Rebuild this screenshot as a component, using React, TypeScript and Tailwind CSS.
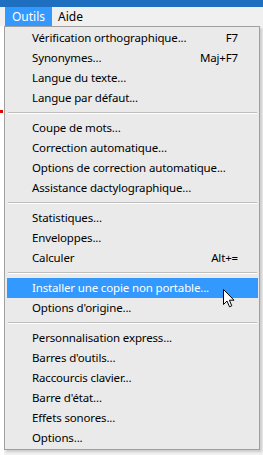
const font = { fontFamily: '"Segoe UI", "Noto Sans", sans-serif' };

type Entry = { label: string; shortcut?: string; active?: boolean } | "sep";

const entries: Entry[] = [
  { label: "Vérification orthographique...", shortcut: "F7" },
  { label: "Synonymes...", shortcut: "Maj+F7" },
  { label: "Langue du texte..." },
  { label: "Langue par défaut..." },
  "sep",
  { label: "Coupe de mots..." },
  { label: "Correction automatique..." },
  { label: "Options de correction automatique..." },
  { label: "Assistance dactylographique..." },
  "sep",
  { label: "Statistiques..." },
  { label: "Enveloppes..." },
  { label: "Calculer", shortcut: "Alt+=" },
  "sep",
  { label: "Installer une copie non portable...", active: true },
  { label: "Options d'origine..." },
  "sep",
  { label: "Personnalisation express..." },
  { label: "Barres d'outils..." },
  { label: "Raccourcis clavier..." },
  { label: "Barre d'état..." },
  { label: "Effets sonores..." },
  { label: "Options..." },
];

function Cursor() {
  return (
    <svg width="12" height="19" viewBox="0 0 12 19" className="absolute left-[216px] top-[11px] z-10">
      <path d="M0.5 0.5 L0.5 15.5 L4 12 L6.5 17.8 L8.8 16.8 L6.4 11.2 L11 11.2 Z" fill="#ffffff" stroke="#000000" strokeWidth="1" strokeLinejoin="round" />
    </svg>
  );
}

export default function App() {
  return (
    <div className="flex h-[455px] w-[263px] flex-col overflow-hidden bg-[#f0f0f0] text-[11.5px] tracking-[-0.15px] text-black" style={font}>
      {/* title strip */}
      <div className="h-[7px] shrink-0 bg-[#1f6fc1]" />

      {/* menu bar */}
      <div className="flex h-[19px] shrink-0 items-center bg-[#f0f0f0] pl-[5px] text-[12px] tracking-normal">
        <div className="flex h-full items-center bg-[#3399ff] px-[7px] text-white">Outils</div>
        <div className="flex h-full items-center px-[6px]">Aide</div>
      </div>

      <div className="flex min-h-0 flex-1">
        {/* document edge */}
        <div className="flex w-[4px] shrink-0 flex-col bg-white">
          <div className="h-[84px]" />
          <div className="h-[3px] w-[3px] bg-[#e00000]" />
        </div>

        {/* dropdown */}
        <div className="flex h-[424px] w-[256px] shrink-0 flex-col border border-[#a0a0a0] bg-[#eaeaea] py-[1px] pl-[2px] pr-[1px] shadow-[2px_2px_2px_rgba(0,0,0,0.15)]">
          {entries.map((e, i) =>
            e === "sep" ? (
              <div key={i} className="flex h-[10px] shrink-0 flex-col justify-center px-[1px]">
                <div className="h-px bg-[#bdbdbd]" />
                <div className="h-px bg-[#ffffff]" />
              </div>
            ) : (
              <div
                key={i}
                className={
                  e.active
                    ? "relative flex h-[20px] shrink-0 items-center justify-between bg-[#3399ff] pl-[25px] pr-[20px] text-white"
                    : "flex h-[20px] shrink-0 items-center justify-between pl-[25px] pr-[20px]"
                }
              >
                <span className="whitespace-nowrap">{e.label}</span>
                {e.shortcut ? <span className="whitespace-nowrap">{e.shortcut}</span> : null}
                {e.active ? <Cursor /> : null}
              </div>
            )
          )}
        </div>

        <div className="flex-1" />
      </div>
    </div>
  );
}
